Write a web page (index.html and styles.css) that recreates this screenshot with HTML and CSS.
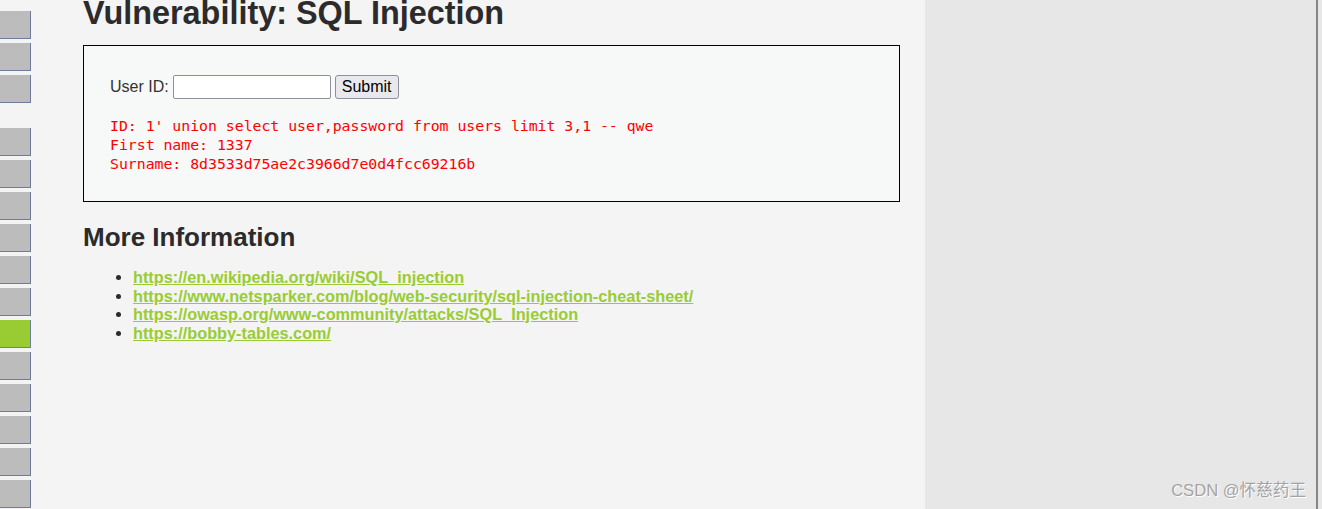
FILE: index.html
```html
<!DOCTYPE html>
<html lang="en">
<head>
<meta charset="utf-8">
<title>Vulnerability: SQL Injection</title>
<link rel="stylesheet" href="styles.css">
</head>
<body>
<div class="page">
  <div class="main">
    <nav class="menu">
      <ul class="menu-block">
        <li class="menu-btn"></li>
        <li class="menu-btn"></li>
        <li class="menu-btn"></li>
      </ul>
      <ul class="menu-block">
        <li class="menu-btn"></li>
        <li class="menu-btn"></li>
        <li class="menu-btn"></li>
        <li class="menu-btn"></li>
        <li class="menu-btn"></li>
        <li class="menu-btn"></li>
        <li class="menu-btn selected"></li>
        <li class="menu-btn"></li>
        <li class="menu-btn"></li>
        <li class="menu-btn"></li>
        <li class="menu-btn"></li>
        <li class="menu-btn"></li>
      </ul>
    </nav>
    <div class="body-content">
      <h1 class="title">Vulnerability: SQL Injection</h1>
      <div class="vulnerable-code-area">
        <form class="id-form">
          <label class="id-label">User ID:</label>
          <input class="id-input" type="text" name="id">
          <button class="submit-btn" type="button">Submit</button>
        </form>
        <pre class="result">ID: 1' union select user,password from users limit 3,1 -- qwe
First name: 1337
Surname: 8d3533d75ae2c3966d7e0d4fcc69216b</pre>
      </div>
      <h2 class="subtitle">More Information</h2>
      <ul class="links">
        <li><a href="#">https://en.wikipedia.org/wiki/SQL_injection</a></li>
        <li><a href="#">https://www.netsparker.com/blog/web-security/sql-injection-cheat-sheet/</a></li>
        <li><a href="#">https://owasp.org/www-community/attacks/SQL_Injection</a></li>
        <li><a href="#">https://bobby-tables.com/</a></li>
      </ul>
    </div>
  </div>
  <div class="side">
    <span class="watermark">CSDN @怀慈药王</span>
  </div>
  <div class="edge"></div>
</div>
</body>
</html>
```

FILE: styles.css
```css
html, body {
  margin: 0;
  padding: 0;
  height: 100%;
  overflow: hidden;
}
body {
  font-family: "Liberation Sans", Arial, sans-serif;
  background: #e7e7e7;
}
.page {
  display: flex;
  height: 509px;
}
.main {
  width: 925px;
  background: #f4f4f4;
  display: flex;
  flex-shrink: 0;
}
.menu {
  width: 31px;
  flex-shrink: 0;
  padding-top: 11px;
}
.menu-block {
  list-style: none;
  margin: 0 0 25px 0;
  padding: 0;
  display: flex;
  flex-direction: column;
  gap: 4px;
}
.menu-btn {
  height: 27px;
  background: #bcbcbc;
  border-right: 1px solid #6e7d9a;
  border-bottom: 1px solid #6e7d9a;
}
.menu-btn.selected {
  background: #99cc33;
}
.body-content {
  margin-left: 52px;
  width: 817px;
}
.title {
  margin: -7px 0 0 0;
  font-size: 32.4px;
  line-height: 40px;
  font-weight: bold;
  color: #2b2b2b;
}
.vulnerable-code-area {
  margin-top: 12px;
  border: 1px solid #000;
  background: #f7f8f8;
  padding: 29px 0 0 26px;
  box-sizing: border-box;
  height: 157px;
}
.id-form {
  display: flex;
  align-items: center;
  height: 24px;
}
.id-label {
  font-size: 16px;
  color: #333;
  margin-right: 4px;
}
.id-input {
  width: 158px;
  height: 24px;
  box-sizing: border-box;
  border: 1px solid #8f8f9d;
  border-radius: 2px;
  background: #fff;
  padding: 0 3px;
  margin: 0 4px 0 0;
}
.submit-btn {
  width: 64px;
  height: 24px;
  box-sizing: border-box;
  border: 1px solid #8f8f9d;
  border-radius: 3px;
  background: #e9e9ed;
  font-family: "Liberation Sans", Arial, sans-serif;
  font-size: 16px;
  color: #000;
  padding: 0;
  margin: 0;
}
.result {
  margin: 17px 0 0 0;
  font-family: "DejaVu Sans Mono", "Liberation Mono", monospace;
  font-size: 14.8px;
  line-height: 19px;
  color: #ff0000;
}
.subtitle {
  margin: 19px 0 0 0;
  font-size: 26px;
  line-height: 32px;
  font-weight: bold;
  color: #2b2b2b;
}
.links {
  margin: 15px 0 0 0;
  padding-left: 50px;
  font-size: 16.3px;
  line-height: 18.7px;
  color: #2b2b2b;
}
.links a {
  color: #99cc33;
  font-weight: bold;
  text-decoration: underline;
}
.side {
  width: 391px;
  flex-shrink: 0;
  display: flex;
  align-items: flex-end;
  justify-content: flex-end;
  padding: 0 10px 9px 0;
  box-sizing: border-box;
}
.watermark {
  font-family: "Liberation Sans", "Noto Sans CJK SC", sans-serif;
  font-size: 16.6px;
  color: #a3a3a3;
  text-shadow: 1px 1px 0 #ffffff;
  line-height: 18px;
}
.edge {
  width: 2px;
  background: #878787;
  flex-shrink: 0;
}
```
